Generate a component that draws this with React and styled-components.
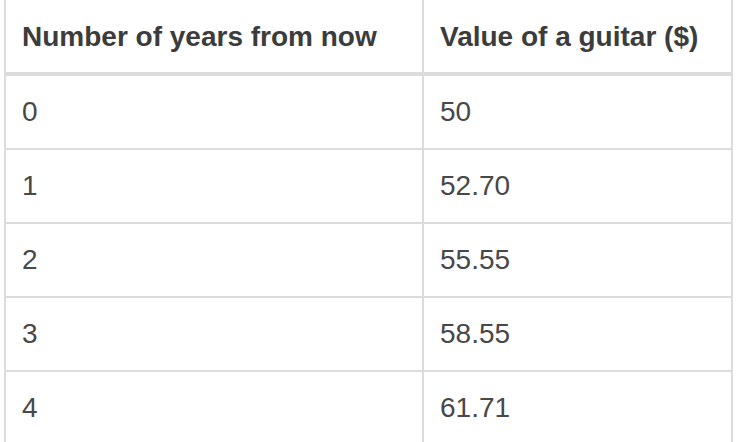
import React from 'react';
import styled, { createGlobalStyle } from 'styled-components';

const GlobalStyle = createGlobalStyle`
  body {
    margin: 0;
    background: #ffffff;
    font-family: "Liberation Sans", Arial, sans-serif;
  }
`;

const Page = styled.div`
  padding-left: 4px;
  width: 738px;
  height: 442px;
  overflow: hidden;
  box-sizing: border-box;
`;

const Table = styled.table`
  border-collapse: separate;
  border-spacing: 0;
  border-left: 2px solid #dcdcdc;
  width: 729px;
`;

const HeadCell = styled.th`
  text-align: left;
  font-weight: bold;
  font-size: 28px;
  color: #3c3c3c;
  height: 76px;
  padding: 2px 0 0 16px;
  box-sizing: border-box;
  border-right: 2px solid #dcdcdc;
  border-bottom: 4px solid #dcdcdc;
  width: ${(props) => props.w}px;
  vertical-align: middle;
`;

const Cell = styled.td`
  font-size: 28px;
  color: #484848;
  height: 72px;
  padding: 0 0 0 16px;
  border-right: 2px solid #dcdcdc;
  border-bottom: 2px solid #dcdcdc;
  vertical-align: middle;
`;

const rows = [
  ['0', '50'],
  ['1', '52.70'],
  ['2', '55.55'],
  ['3', '58.55'],
  ['4', '61.71'],
];

const App = () => {
  return (
    <Page>
      <GlobalStyle />
      <Table>
        <thead>
          <tr>
            <HeadCell w={418}>Number of years from now</HeadCell>
            <HeadCell w={309}>Value of a guitar ($)</HeadCell>
          </tr>
        </thead>
        <tbody>
          {rows.map((r) => (
            <tr key={r[0]}>
              <Cell>{r[0]}</Cell>
              <Cell>{r[1]}</Cell>
            </tr>
          ))}
        </tbody>
      </Table>
    </Page>
  );
};

export default App;
